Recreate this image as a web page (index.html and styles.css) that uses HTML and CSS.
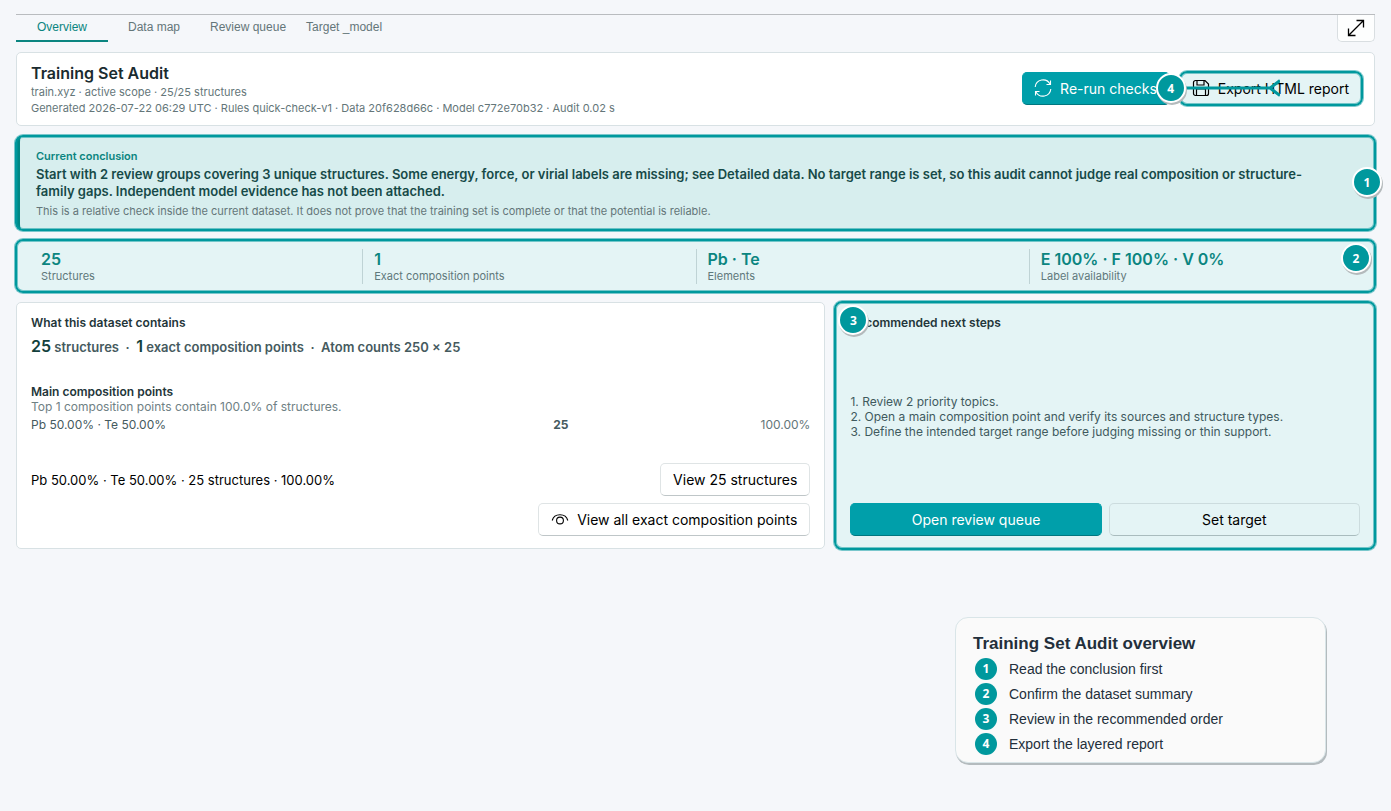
FILE: index.html
```html
<!DOCTYPE html>
<html lang="en">
<head>
    <meta charset="UTF-8">
    <meta name="viewport" content="width=device-width, initial-scale=1.0">
    <title>Training Set Audit</title>
    <link rel="stylesheet" href="styles.css">
</head>
<body>
    <nav class="tabs">
        <button class="tab active">Overview</button>
        <button class="tab">Data map</button>
        <button class="tab">Review queue</button>
        <button class="tab">Target _model</button>
        <button class="expand" aria-label="Expand">
            <svg width="18" height="18" viewBox="0 0 18 18" fill="none" stroke="currentColor" stroke-width="1.3">
                <path d="M1.5 16.5L16.5 1.5M9.5 1.5H16.5V8.5M1.5 9.5V16.5H8.5"/>
            </svg>
        </button>
    </nav>

    <main class="content">
        <header class="card header">
            <div>
                <h1>Training Set Audit</h1>
                <p class="meta">train.xyz · active scope · 25/25 structures</p>
                <p class="meta">Generated 2026-07-22 06:29 UTC · Rules quick-check-v1 · Data 20f628d66c · Model c772e70b32 · Audit 0.02 s</p>
            </div>
            <div class="header-actions">
                <button class="btn primary">
                    <svg width="18" height="18" viewBox="0 0 18 18" fill="none" stroke="currentColor" stroke-width="1.1">
                        <path d="M1.2 8A7.9 7.9 0 0 1 16 5M16.5 1.5V5.5H12.5M16.8 10A7.9 7.9 0 0 1 2 13M1.5 16.5V12.5H5.5"/>
                    </svg>
                    Re-run checks
                </button>
                <div class="export highlight">
                    <button class="btn">
                        <svg width="18" height="18" viewBox="0 0 18 18" fill="none" stroke="currentColor" stroke-width="1.2">
                            <path d="M3.5 1.5H13L16.5 5V14.5A2 2 0 0 1 14.5 16.5H3.5A2 2 0 0 1 1.5 14.5V3.5A2 2 0 0 1 3.5 1.5ZM5 1.5V6H12V1.5M4.5 16.5V10H13.5V16.5"/>
                        </svg>
                        Export HTML report
                    </button>
                    <svg class="arrow" width="100" height="18" viewBox="0 0 100 18" fill="none" stroke="currentColor" stroke-width="3">
                        <path d="M2 9H91M100 1.5L90 9L100 16.5"/>
                    </svg>
                    <span class="badge badge-export">4</span>
                </div>
            </div>
        </header>

        <section class="conclusion highlight">
            <h2>Current conclusion</h2>
            <p class="verdict">Start with 2 review groups covering 3 unique structures. Some energy, force, or virial labels are missing; see Detailed data. No target range is set, so this audit cannot judge real composition or structure-<wbr>family gaps. Independent model evidence has not been attached.</p>
            <p class="meta">This is a relative check inside the current dataset. It does not prove that the training set is complete or that the potential is reliable.</p>
            <span class="badge badge-conclusion">1</span>
        </section>

        <section class="summary highlight">
            <div class="metric"><strong>25</strong><span>Structures</span></div>
            <div class="metric"><strong>1</strong><span>Exact composition points</span></div>
            <div class="metric"><strong>Pb · Te</strong><span>Elements</span></div>
            <div class="metric"><strong>E 100% · F 100% · V 0%</strong><span>Label availability</span></div>
            <span class="badge badge-summary">2</span>
        </section>

        <div class="panels">
            <section class="card panel">
                <h3>What this dataset contains</h3>
                <p class="facts"><b>25</b> structures &nbsp;·&nbsp; <b>1</b> exact composition points &nbsp;·&nbsp; Atom counts 250 × 25</p>
                <h3>Main composition points</h3>
                <p class="note">Top 1 composition points contain 100.0% of structures.</p>
                <table class="points">
                    <tr>
                        <td>Pb 50.00% · Te 50.00%</td>
                        <td class="count">25</td>
                        <td class="share">100.00%</td>
                    </tr>
                </table>
                <div class="point-row">
                    <span>Pb 50.00% · Te 50.00% · 25 structures · 100.00%</span>
                    <button class="btn">View 25 structures</button>
                </div>
                <button class="btn view-all">
                    <svg width="18" height="18" viewBox="0 0 18 18" fill="none" stroke="currentColor" stroke-width="1.1">
                        <path d="M1.2 10.5C3.2 2.8 14.8 2.8 16.8 10.5"/>
                        <circle cx="9" cy="10.5" r="3.4"/>
                    </svg>
                    View all exact composition points
                </button>
            </section>

            <section class="panel next highlight">
                <h3>Recommended next steps</h3>
                <ol class="steps">
                    <li>Review 2 priority topics.</li>
                    <li>Open a main composition point and verify its sources and structure types.</li>
                    <li>Define the intended target range before judging missing or thin support.</li>
                </ol>
                <div class="next-actions">
                    <button class="btn primary">Open review queue</button>
                    <button class="btn">Set target</button>
                </div>
                <span class="badge badge-next">3</span>
            </section>
        </div>
    </main>

    <aside class="legend">
        <h2>Training Set Audit overview</h2>
        <ul>
            <li><span class="dot">1</span>Read the conclusion first</li>
            <li><span class="dot">2</span>Confirm the dataset summary</li>
            <li><span class="dot">3</span>Review in the recommended order</li>
            <li><span class="dot">4</span>Export the layered report</li>
        </ul>
    </aside>
</body>
</html>
```
FILE: styles.css
```css
* {
    box-sizing: border-box;
}
body {
    margin: 0;
    padding: 14px 16px;
    min-height: 100vh;
    position: relative;
    background: #f5f7fa;
    color: #24363a;
    font-family: Inter, sans-serif;
    font-size: 12px;
}
h1, h2, h3, p, ul, ol {
    margin: 0;
    padding: 0;
}
button {
    font-family: inherit;
    cursor: pointer;
}

/* Tabs */
.tabs {
    display: flex;
    height: 28px;
    border-top: 1px solid #b9bcbf;
}
.tab {
    min-width: 92px;
    padding: 0 10px 2px;
    border: none;
    border-bottom: 2px solid transparent;
    background: none;
    color: #647679;
    font-family: "Liberation Sans", sans-serif;
    font-size: 12px;
}
.tab.active {
    color: #0b8580;
    border-bottom-color: #0b8580;
}
.expand {
    display: flex;
    align-items: center;
    justify-content: center;
    width: 38px;
    margin-left: auto;
    padding: 0;
    border: 1px solid #d9dee1;
    border-top: none;
    border-radius: 0 0 5px 5px;
    background: #fdfefe;
    color: #000;
}

.content {
    display: flex;
    flex-direction: column;
    gap: 10px;
    margin-top: 10px;
}
.card {
    border: 1px solid #d8e1e4;
    border-radius: 5px;
    background: #fff;
}

/* Outline drawn over the parts the tour points at */
.highlight {
    position: relative;
}
.highlight::after {
    content: "";
    position: absolute;
    inset: -1px;
    border: 2px solid #00989d;
    border-radius: 8px;
    box-shadow: 0 0 0 1px #00989d80, inset 0 0 0 1px #00989d80;
    pointer-events: none;
}
.badge {
    position: absolute;
    z-index: 2;
    display: flex;
    align-items: center;
    justify-content: center;
    width: 30px;
    height: 30px;
    border: 2px solid #fff;
    border-radius: 50%;
    background: #00989d;
    box-shadow: 1px 2px 0 #b4babc;
    color: #fff;
    font: bold 12px "Open Sans", sans-serif;
}

/* Header */
.header {
    display: flex;
    justify-content: space-between;
    align-items: center;
    padding: 9px 12px 9px 14px;
}
h1 {
    color: #1a2b2f;
    font-size: 16px;
    font-weight: 600;
    line-height: 22px;
}
.meta {
    color: #647679;
    font-size: 11px;
    line-height: 16px;
}
.header-actions {
    display: flex;
    gap: 10px;
    padding-bottom: 1px;
}
.btn {
    display: flex;
    align-items: center;
    justify-content: center;
    gap: 8px;
    height: 33px;
    padding: 0 12px 1px;
    border: 1px solid #dfe4e5;
    border-bottom-color: #bfc6c8;
    border-radius: 5px;
    background: transparent;
    color: #000;
    font-size: 14px;
    white-space: nowrap;
}
.header .btn {
    padding: 0 12px 1px 11px;
}
.primary {
    border-color: #009faa;
    border-bottom-color: #007780;
    background: #009faa;
    color: #fff;
}
.export {
    border-radius: 6px;
    background: #e4f4f5;
}
.arrow {
    position: absolute;
    z-index: 1;
    left: 0;
    top: 7px;
    color: #00989d;
}
.badge-export {
    left: -24px;
    top: 1px;
}

/* Conclusion */
.conclusion {
    padding: 12px 40px 11px 16px;
    border-left: 4px solid #008784;
    border-radius: 6px;
    background: #d7eeee;
}
.conclusion::after {
    left: -5px;
}
.conclusion h2 {
    color: #0b8580;
    font-size: 11px;
    font-weight: 600;
    line-height: 16px;
}
.verdict {
    margin: 2px 0 3px;
    color: #164a48;
    font-size: 13px;
    font-weight: 600;
    line-height: 17px;
}
.badge-conclusion {
    right: -7px;
    top: 31px;
}

/* Summary */
.summary {
    display: grid;
    grid-template-columns: repeat(4, 1fr);
    padding: 9px 13px 8px;
    border-radius: 6px;
    background: #e4f4f5;
}
.metric {
    display: flex;
    flex-direction: column;
    padding-left: 11px;
    border-left: 1px solid #bfd3d5;
}
.metric:first-child {
    border-left-color: transparent;
}
.metric strong {
    color: #0b8580;
    font-size: 16px;
    font-weight: 600;
    line-height: 20px;
}
.metric span {
    color: #5f787b;
    font-size: 11px;
    line-height: 15px;
}
.badge-summary {
    right: 4px;
    top: 3px;
}

/* Panels */
.panels {
    display: grid;
    grid-template-columns: 3fr 2fr;
    gap: 10px;
}
.panel {
    display: flex;
    flex-direction: column;
    padding: 12px 14px;
}
h3 {
    font-size: 12px;
    font-weight: 600;
    line-height: 15px;
}
.facts {
    margin: 4px 0 25px;
    color: #455a5e;
    font-size: 13px;
    font-weight: 600;
    line-height: 24px;
}
.facts b {
    color: #12403c;
    font-size: 16px;
    font-weight: 600;
}
.note {
    color: #6f8184;
    line-height: 15px;
}
.points {
    width: 100%;
    margin-top: 1px;
    table-layout: fixed;
    border-collapse: collapse;
    color: #455a5e;
    line-height: 20px;
}
.points td {
    padding: 0;
}
.points td:first-child {
    width: 67%;
}
.points .count {
    font-weight: 700;
}
.points .share {
    color: #647679;
    text-align: right;
}
.point-row {
    display: flex;
    justify-content: space-between;
    align-items: center;
    margin: 28px 0 7px;
    color: #000;
    font-size: 13px;
}
.view-all {
    align-self: flex-end;
}
.next {
    padding: 13px 15px;
    border-radius: 6px;
    background: #e4f4f5;
}
.steps {
    display: flex;
    flex: 1;
    flex-direction: column;
    justify-content: center;
    color: #3f5a5e;
    line-height: 15px;
    counter-reset: step;
}
.steps li {
    display: block;
}
.steps li::before {
    counter-increment: step;
    content: counter(step) ". ";
}
.next-actions {
    display: grid;
    grid-template-columns: 1fr 1fr;
    gap: 7px;
}
.next .btn:not(.primary) {
    border-color: #ccdcde;
    border-bottom-color: #a9bcbe;
}
.badge-next {
    left: 3px;
    top: 3px;
}

/* Legend */
.legend {
    position: absolute;
    right: 65px;
    top: 617px;
    width: 371px;
    padding: 14px 18px 6px 17px;
    border: 1px solid #d9e5e8;
    border-radius: 13px;
    background: #fafafa;
    box-shadow: 1px 2px 0 #b4bbbe;
    color: #232f3b;
    font-family: "Liberation Sans", sans-serif;
}
.legend h2 {
    font-size: 17px;
    line-height: 24px;
}
.legend ul {
    list-style: none;
}
.legend li {
    display: flex;
    align-items: center;
    gap: 12px;
    height: 25px;
    padding-left: 2px;
    font-size: 14px;
}
.dot {
    display: flex;
    align-items: center;
    justify-content: center;
    width: 22px;
    height: 22px;
    border-radius: 50%;
    background: #00989d;
    color: #fff;
    font: bold 12px "Open Sans", sans-serif;
}
```
